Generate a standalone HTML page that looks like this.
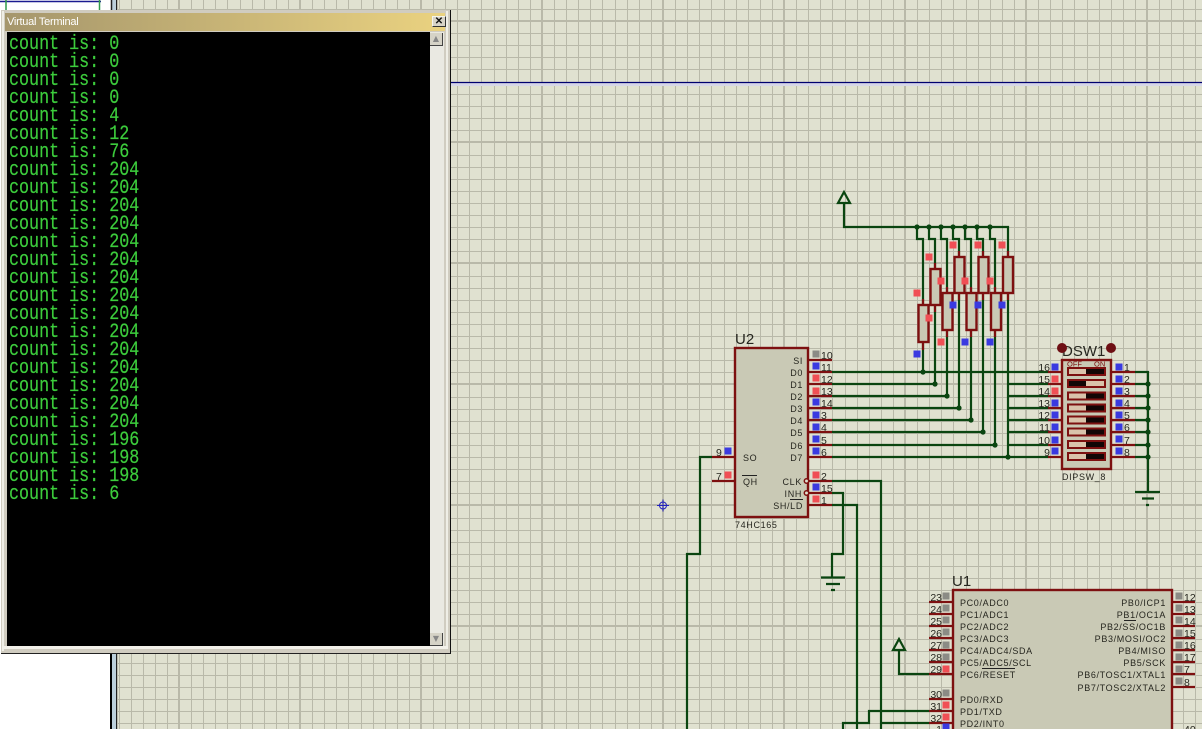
<!DOCTYPE html>
<html><head><meta charset="utf-8"><title>Virtual Terminal</title>
<style>
html,body{margin:0;padding:0;background:#fff}
#p{position:relative;width:1202px;height:729px;overflow:hidden;background:#fff}
svg{position:absolute;left:0;top:0}
svg text{font-family:"Liberation Sans",sans-serif;fill:#26261f}
.l{font-size:9px;letter-spacing:.65px}
.n{font-size:10.5px}
.h{font-size:15px}
.w{fill:none;stroke:#0a4510;stroke-width:2.2}
.r{fill:none;stroke:#7d1010;stroke-width:2.2}
.b{fill:#c9c9b5;stroke:#7d1010;stroke-width:2.4}
#win{position:absolute;left:1px;top:10px;width:450px;height:644px;box-sizing:border-box;background:#d0ccc0;border-right:1.5px solid #111;border-bottom:1.5px solid #222}
#tb{position:absolute;left:4px;top:3px;width:440px;height:18px;background:linear-gradient(90deg,#a5966c,#ead280);color:#fff;font:11px/19px "Liberation Sans",sans-serif;letter-spacing:-.25px;padding-left:2px;box-sizing:border-box}
#lft{position:absolute;left:1px;top:1px;width:2px;height:640px;background:#efeee6}
#bot{position:absolute;left:1px;top:636px;width:446px;height:3px;background:#f3f1ea}
#rgt{position:absolute;left:445px;top:1px;width:2px;height:638px;background:#efeee6}
#x{position:absolute;left:431px;top:6px;width:12px;height:9px;background:#d8d4c8;border:1px solid;border-color:#f5f5ee #333 #333 #f5f5ee;font:bold 10px/9px "Liberation Sans",sans-serif;text-align:center;color:#111;box-sizing:content-box}
#term{position:absolute;left:6px;top:22px;width:423px;height:614px;background:#000;overflow:hidden}
#term pre{position:absolute;left:2px;top:4px;margin:0;font:20px/18px "Liberation Mono",monospace;color:#3ccc3c;-webkit-text-stroke:.2px #3ccc3c;transform:scaleX(.835);transform-origin:0 0}
#sb{position:absolute;left:429px;top:22px;width:14px;height:614px;background:#eae9e2}
.btn{position:absolute;left:0;width:12px;height:12px;background:#d6d3c7;border-right:1px solid #444;border-bottom:1px solid #444;color:#888;font:8px/12px "DejaVu Sans",sans-serif;text-align:center}
</style></head><body><div id="p">
<svg width="1202" height="729" viewBox="0 0 1202 729" xmlns="http://www.w3.org/2000/svg">
<rect x="117" y="0" width="1085" height="729" fill="#e0e1d0"/>
<rect x="0" y="0" width="110" height="10" fill="#fff"/>
<path d="M0 1.5H101" stroke="#1a1a90" stroke-width="1.5"/>
<path d="M6 0V10M99.500 0V10" stroke="#2f9a4a" stroke-width="1.5"/>
<rect x="112" y="0" width="4" height="729" fill="#bcd0dc"/>
<rect x="110" y="654" width="2" height="75" fill="#000"/>
<path d="M111.500 0V10" stroke="#222" stroke-width="1.5"/>
<rect x="116" y="0" width="1.200" height="729" fill="#222"/>
<path fill="none" stroke="#b9b9a9" stroke-width="1" d="M119.500 0V729M131.500 0V729M143.500 0V729M155.500 0V729M167.500 0V729M191.500 0V729M203.500 0V729M215.500 0V729M227.500 0V729M240.500 0V729M252.500 0V729M264.500 0V729M276.500 0V729M288.500 0V729M312.500 0V729M324.500 0V729M336.500 0V729M348.500 0V729M361.500 0V729M373.500 0V729M385.500 0V729M397.500 0V729M409.500 0V729M433.500 0V729M445.500 0V729M457.500 0V729M469.500 0V729M481.500 0V729M494.500 0V729M506.500 0V729M518.500 0V729M530.500 0V729M554.500 0V729M566.500 0V729M578.500 0V729M590.500 0V729M602.500 0V729M615.500 0V729M627.500 0V729M639.500 0V729M651.500 0V729M675.500 0V729M687.500 0V729M699.500 0V729M711.500 0V729M724.500 0V729M736.500 0V729M748.500 0V729M760.500 0V729M772.500 0V729M796.500 0V729M808.500 0V729M820.500 0V729M832.500 0V729M845.500 0V729M857.500 0V729M869.500 0V729M881.500 0V729M893.500 0V729M917.500 0V729M929.500 0V729M941.500 0V729M953.500 0V729M966.500 0V729M978.500 0V729M990.500 0V729M1002.500 0V729M1014.500 0V729M1038.500 0V729M1050.500 0V729M1062.500 0V729M1074.500 0V729M1087.500 0V729M1099.500 0V729M1111.500 0V729M1123.500 0V729M1135.500 0V729M1159.500 0V729M1171.500 0V729M1183.500 0V729M1195.500 0V729M117 9.500H1202M117 33.500H1202M117 45.500H1202M117 57.500H1202M117 69.500H1202M117 94.500H1202M117 106.500H1202M117 118.500H1202M117 130.500H1202M117 155.500H1202M117 167.500H1202M117 179.500H1202M117 191.500H1202M117 203.500H1202M117 215.500H1202M117 227.500H1202M117 239.500H1202M117 251.500H1202M117 276.500H1202M117 288.500H1202M117 300.500H1202M117 312.500H1202M117 324.500H1202M117 336.500H1202M117 348.500H1202M117 360.500H1202M117 372.500H1202M117 397.500H1202M117 409.500H1202M117 421.500H1202M117 433.500H1202M117 445.500H1202M117 457.500H1202M117 469.500H1202M117 481.500H1202M117 493.500H1202M117 518.500H1202M117 530.500H1202M117 542.500H1202M117 554.500H1202M117 566.500H1202M117 578.500H1202M117 590.500H1202M117 602.500H1202M117 614.500H1202M117 639.500H1202M117 651.500H1202M117 663.500H1202M117 675.500H1202M117 687.500H1202M117 699.500H1202M117 711.500H1202M117 723.500H1202"/>
<path fill="none" stroke="#b9b9a9" stroke-width="2" d="M179 0V729M300 0V729M421 0V729M542 0V729M663 0V729M784 0V729M905 0V729M1026 0V729M1147 0V729M117 21H1202M117 142H1202M117 263H1202M117 384H1202M117 505H1202M117 626H1202"/>
<rect x="451" y="83" width="751" height="3" fill="#d6d6e8"/>
<path d="M451 82.500H1202" stroke="#00006e" stroke-width="1.300"/>
<g fill="none" stroke="#2222c0" stroke-width="1"><circle cx="663" cy="505.500" r="3.500"/><path d="M657 505.500H669M663 499.500V511.500"/></g>

<!-- green wires -->
<path class="w" d="M844 203V227H1008V457M917 227V239H923V372M929 227V239H935V384M941 227V239H947V396M953 227V239H959V408M965 227V239H971V420M977 227V239H983V432M990 227V239H995V445"/>
<path class="w" d="M844 192L838 203H850Z"/>
<path class="w" d="M832 372H923M832 384H935M832 396H947M832 408H959M832 420H971M832 432H983M832 445H995M832 457H1008M1008 372H1048M1008 384H1048M1008 396H1048M1008 408H1048M1008 420H1048M1008 432H1048M1008 445H1048M1008 457H1048M923 372H1008"/>
<path class="w" d="M712 457H700V554H687V729M832 481H881V729M832 493H843V554H832V577M821 577.500H845M826 584H840M831 590H835M832 505H857V729"/>
<path class="w" d="M1135 372H1148V492M1135 384H1148M1135 396H1148M1135 408H1148M1135 420H1148M1135 432H1148M1135 445H1148M1135 457H1148M1135 492H1160M1142 498.500H1154M1146 505H1149"/>
<path class="w" d="M899 639L893 650H905ZM899 650V674H929M929 711H869V723H843V729M881 723H929"/>
<g fill="#0a4510">
<circle cx="917" cy="227" r="2.600"/><circle cx="929" cy="227" r="2.600"/><circle cx="941" cy="227" r="2.600"/><circle cx="953" cy="227" r="2.600"/><circle cx="965" cy="227" r="2.600"/><circle cx="977" cy="227" r="2.600"/><circle cx="990" cy="227" r="2.600"/>
<circle cx="923" cy="372" r="2.600"/><circle cx="935" cy="384" r="2.600"/><circle cx="947" cy="396" r="2.600"/><circle cx="959" cy="408" r="2.600"/><circle cx="971" cy="420" r="2.600"/><circle cx="983" cy="432" r="2.600"/><circle cx="995" cy="445" r="2.600"/><circle cx="1008" cy="457" r="2.600"/>
<circle cx="1148" cy="384" r="2.600"/><circle cx="1148" cy="396" r="2.600"/><circle cx="1148" cy="408" r="2.600"/><circle cx="1148" cy="420" r="2.600"/><circle cx="1148" cy="432" r="2.600"/><circle cx="1148" cy="445" r="2.600"/><circle cx="1148" cy="457" r="2.600"/>
</g>

<!-- resistors -->
<path class="r" d="M923 299V305M923 342V350M935 263V269M935 305V312M947 287V293M947 330V337M959 251V257M959 293V300M971 287V293M971 330V337M983 251V257M983 293V300M995 287V293M995 330V337M1008 251V257M1008 293V300"/>
<rect class="b" x="918.500" y="305" width="10" height="37"/>
<rect class="b" x="930.500" y="269" width="10" height="36"/>
<rect class="b" x="942.500" y="293" width="10" height="37"/>
<rect class="b" x="954.500" y="257" width="10" height="36"/>
<rect class="b" x="966.500" y="293" width="10" height="37"/>
<rect class="b" x="978.500" y="257" width="10" height="36"/>
<rect class="b" x="991" y="293" width="10" height="37"/>
<rect class="b" x="1003" y="257" width="10" height="36"/>

<!-- U2 -->
<path class="r" d="M808 360H832M808 372H832M808 384H832M808 396H832M808 408H832M808 420H832M808 432H832M808 445H832M808 457H832M808 481H832M808 493H832M808 505H832M712 457H735M712 481H735"/>
<rect class="b" x="735" y="348" width="73" height="169"/>
<circle cx="806.500" cy="481" r="2.200" fill="#e0e1d0" stroke="#7d1010" stroke-width="1.500"/>
<circle cx="806.500" cy="493" r="2.200" fill="#e0e1d0" stroke="#7d1010" stroke-width="1.500"/>
<path d="M742 475.500H757M790 499.500H803" stroke="#222" stroke-width="1"/>
<text class="h" x="735" y="344">U2</text>
<g class="l" text-anchor="end">
<text x="803" y="364">SI</text><text x="803" y="376">D0</text><text x="803" y="388">D1</text><text x="803" y="400">D2</text><text x="803" y="412">D3</text><text x="803" y="424">D4</text><text x="803" y="436">D5</text><text x="803" y="449">D6</text><text x="803" y="461">D7</text><text x="802" y="485">CLK</text><text x="802" y="497">INH</text><text x="803" y="509">SH/LD</text>
</g>
<g class="l"><text x="743" y="461">SO</text><text x="743" y="485">QH</text><text x="735" y="528">74HC165</text></g>
<g class="n">
<text x="821" y="359">10</text><text x="821" y="371">11</text><text x="821" y="383">12</text><text x="821" y="395">13</text><text x="821" y="407">14</text><text x="821" y="419">3</text><text x="821" y="431">4</text><text x="821" y="444">5</text><text x="821" y="456">6</text><text x="821" y="480">2</text><text x="821" y="492">15</text><text x="821" y="504">1</text><text x="716" y="456">9</text><text x="716" y="480">7</text>
</g>

<!-- DSW1 -->
<path class="r" d="M1048 372H1062M1048 384H1062M1048 396H1062M1048 408H1062M1048 420H1062M1048 432H1062M1048 445H1062M1048 457H1062M1111 372H1135M1111 384H1135M1111 396H1135M1111 408H1135M1111 420H1135M1111 432H1135M1111 445H1135M1111 457H1135"/>
<rect class="b" x="1062" y="360" width="49" height="109"/>
<text class="h" x="1062" y="356">DSW1</text>
<circle cx="1062" cy="348" r="5" fill="#6e0f14"/><circle cx="1111" cy="348" r="5" fill="#6e0f14"/>
<g style="font-size:7.500px"><text x="1067" y="366.500" style="fill:#7d1010">OFF</text><text x="1094" y="366.500" style="fill:#7d1010">ON</text></g>
<g fill="#d9c3ab" stroke="#7d1010" stroke-width="2">
<rect x="1068" y="368" width="37" height="7"/><rect x="1068" y="380" width="37" height="7"/><rect x="1068" y="392.500" width="37" height="7"/><rect x="1068" y="404.500" width="37" height="7"/><rect x="1068" y="416.500" width="37" height="7"/><rect x="1068" y="428.500" width="37" height="7"/><rect x="1068" y="441" width="37" height="7"/><rect x="1068" y="453" width="37" height="7"/>
</g>
<g fill="#120606">
<rect x="1086" y="369" width="18" height="5"/><rect x="1069" y="381" width="17" height="5"/><rect x="1086" y="393.500" width="18" height="5"/><rect x="1086" y="405.500" width="18" height="5"/><rect x="1086" y="417.500" width="18" height="5"/><rect x="1086" y="429.500" width="18" height="5"/><rect x="1086" y="442" width="18" height="5"/><rect x="1086" y="454" width="18" height="5"/>
</g>
<text class="l" x="1062" y="480">DIPSW_8</text>
<g class="n" text-anchor="end">
<text x="1050" y="371">16</text><text x="1050" y="383">15</text><text x="1050" y="395">14</text><text x="1050" y="407">13</text><text x="1050" y="419">12</text><text x="1050" y="431">11</text><text x="1050" y="444">10</text><text x="1050" y="456">9</text>
</g>
<g class="n">
<text x="1124" y="371">1</text><text x="1124" y="383">2</text><text x="1124" y="395">3</text><text x="1124" y="407">4</text><text x="1124" y="419">5</text><text x="1124" y="431">6</text><text x="1124" y="444">7</text><text x="1124" y="456">8</text>
</g>

<!-- U1 -->
<path class="r" d="M929 602H953M929 614H953M929 626H953M929 638H953M929 650H953M929 662H953M929 674H953M929 699H953M929 711H953M929 723H953M1172 602H1195M1172 614H1195M1172 626H1195M1172 638H1195M1172 650H1195M1172 662H1195M1172 674H1195M1172 687H1195"/>
<rect class="b" x="953" y="590" width="219" height="150"/>
<path d="M982 668.500H1015M1124 620.500H1136" stroke="#222" stroke-width="1"/>
<text class="h" x="952" y="586">U1</text>
<g class="l">
<text x="960" y="606">PC0/ADC0</text><text x="960" y="618">PC1/ADC1</text><text x="960" y="630">PC2/ADC2</text><text x="960" y="642">PC3/ADC3</text><text x="960" y="654">PC4/ADC4/SDA</text><text x="960" y="666">PC5/ADC5/SCL</text><text x="960" y="678">PC6/RESET</text><text x="960" y="703">PD0/RXD</text><text x="960" y="715">PD1/TXD</text><text x="960" y="727">PD2/INT0</text>
</g>
<g class="l" text-anchor="end">
<text x="1166" y="606">PB0/ICP1</text><text x="1166" y="618">PB1/OC1A</text><text x="1166" y="630">PB2/SS/OC1B</text><text x="1166" y="642">PB3/MOSI/OC2</text><text x="1166" y="654">PB4/MISO</text><text x="1166" y="666">PB5/SCK</text><text x="1166" y="678">PB6/TOSC1/XTAL1</text><text x="1166" y="691">PB7/TOSC2/XTAL2</text>
</g>
<g class="n" text-anchor="end">
<text x="942" y="601">23</text><text x="942" y="613">24</text><text x="942" y="625">25</text><text x="942" y="637">26</text><text x="942" y="649">27</text><text x="942" y="661">28</text><text x="942" y="673">29</text><text x="942" y="698">30</text><text x="942" y="710">31</text><text x="942" y="722">32</text><text x="942" y="733">1</text>
</g>
<g class="n">
<text x="1184" y="601">12</text><text x="1184" y="613">13</text><text x="1184" y="625">14</text><text x="1184" y="637">15</text><text x="1184" y="649">16</text><text x="1184" y="661">17</text><text x="1184" y="673">7</text><text x="1184" y="686">8</text><text x="1184" y="733">40</text>
</g>

<!-- pin squares -->
<path fill="#f04f55" stroke="#f04f55" d="M914 290h6v6h-6zM926 254h6v6h-6zM926 315h6v6h-6zM938 278h6v6h-6zM938 339h6v6h-6zM950 242h6v6h-6zM962 278h6v6h-6zM975 242h6v6h-6zM987 278h6v6h-6zM999 242h6v6h-6zM813 375h6v6h-6zM813 388h6v6h-6zM725 472h6v6h-6zM813 472h6v6h-6zM813 496h6v6h-6zM943 666h6v6h-6zM943 702h6v6h-6zM943 714h6v6h-6zM1052 376h6v6h-6zM1052 388h6v6h-6z"/>
<path fill="#3a3ae0" stroke="#3a3ae0" d="M914 351h6v6h-6zM950 302h6v6h-6zM962 339h6v6h-6zM975 302h6v6h-6zM987 339h6v6h-6zM999 302h6v6h-6zM813 363h6v6h-6zM813 399h6v6h-6zM813 412h6v6h-6zM813 424h6v6h-6zM813 436h6v6h-6zM813 448h6v6h-6zM725 448h6v6h-6zM813 484h6v6h-6zM1052 364h6v6h-6zM1052 400h6v6h-6zM1052 412h6v6h-6zM1052 424h6v6h-6zM1052 437h6v6h-6zM1052 448h6v6h-6zM1116 364h6v6h-6zM1116 376h6v6h-6zM1116 388h6v6h-6zM1116 400h6v6h-6zM1116 412h6v6h-6zM1116 424h6v6h-6zM1116 436h6v6h-6zM1116 448h6v6h-6zM943 724h6v6h-6z"/>
<path fill="#8b8b85" stroke="#8b8b85" d="M813 351h6v6h-6zM943 593h6v6h-6zM943 605h6v6h-6zM943 617h6v6h-6zM943 629h6v6h-6zM943 642h6v6h-6zM943 654h6v6h-6zM943 690h6v6h-6zM1176 593h6v6h-6zM1176 605h6v6h-6zM1176 617h6v6h-6zM1176 630h6v6h-6zM1176 642h6v6h-6zM1176 654h6v6h-6zM1176 666h6v6h-6zM1176 678h6v6h-6z"/>
</svg>

<div id="win">
<div id="lft"></div><div id="rgt"></div><div id="bot"></div>
<div id="tb">Virtual Terminal</div>
<div id="x">✕</div>
<div id="term"><pre>count is: 0
count is: 0
count is: 0
count is: 0
count is: 4
count is: 12
count is: 76
count is: 204
count is: 204
count is: 204
count is: 204
count is: 204
count is: 204
count is: 204
count is: 204
count is: 204
count is: 204
count is: 204
count is: 204
count is: 204
count is: 204
count is: 204
count is: 196
count is: 198
count is: 198
count is: 6</pre></div>
<div id="sb"><div class="btn" style="top:1px">▲</div><div class="btn" style="top:601px">▼</div></div>
</div>
</div></body></html>
